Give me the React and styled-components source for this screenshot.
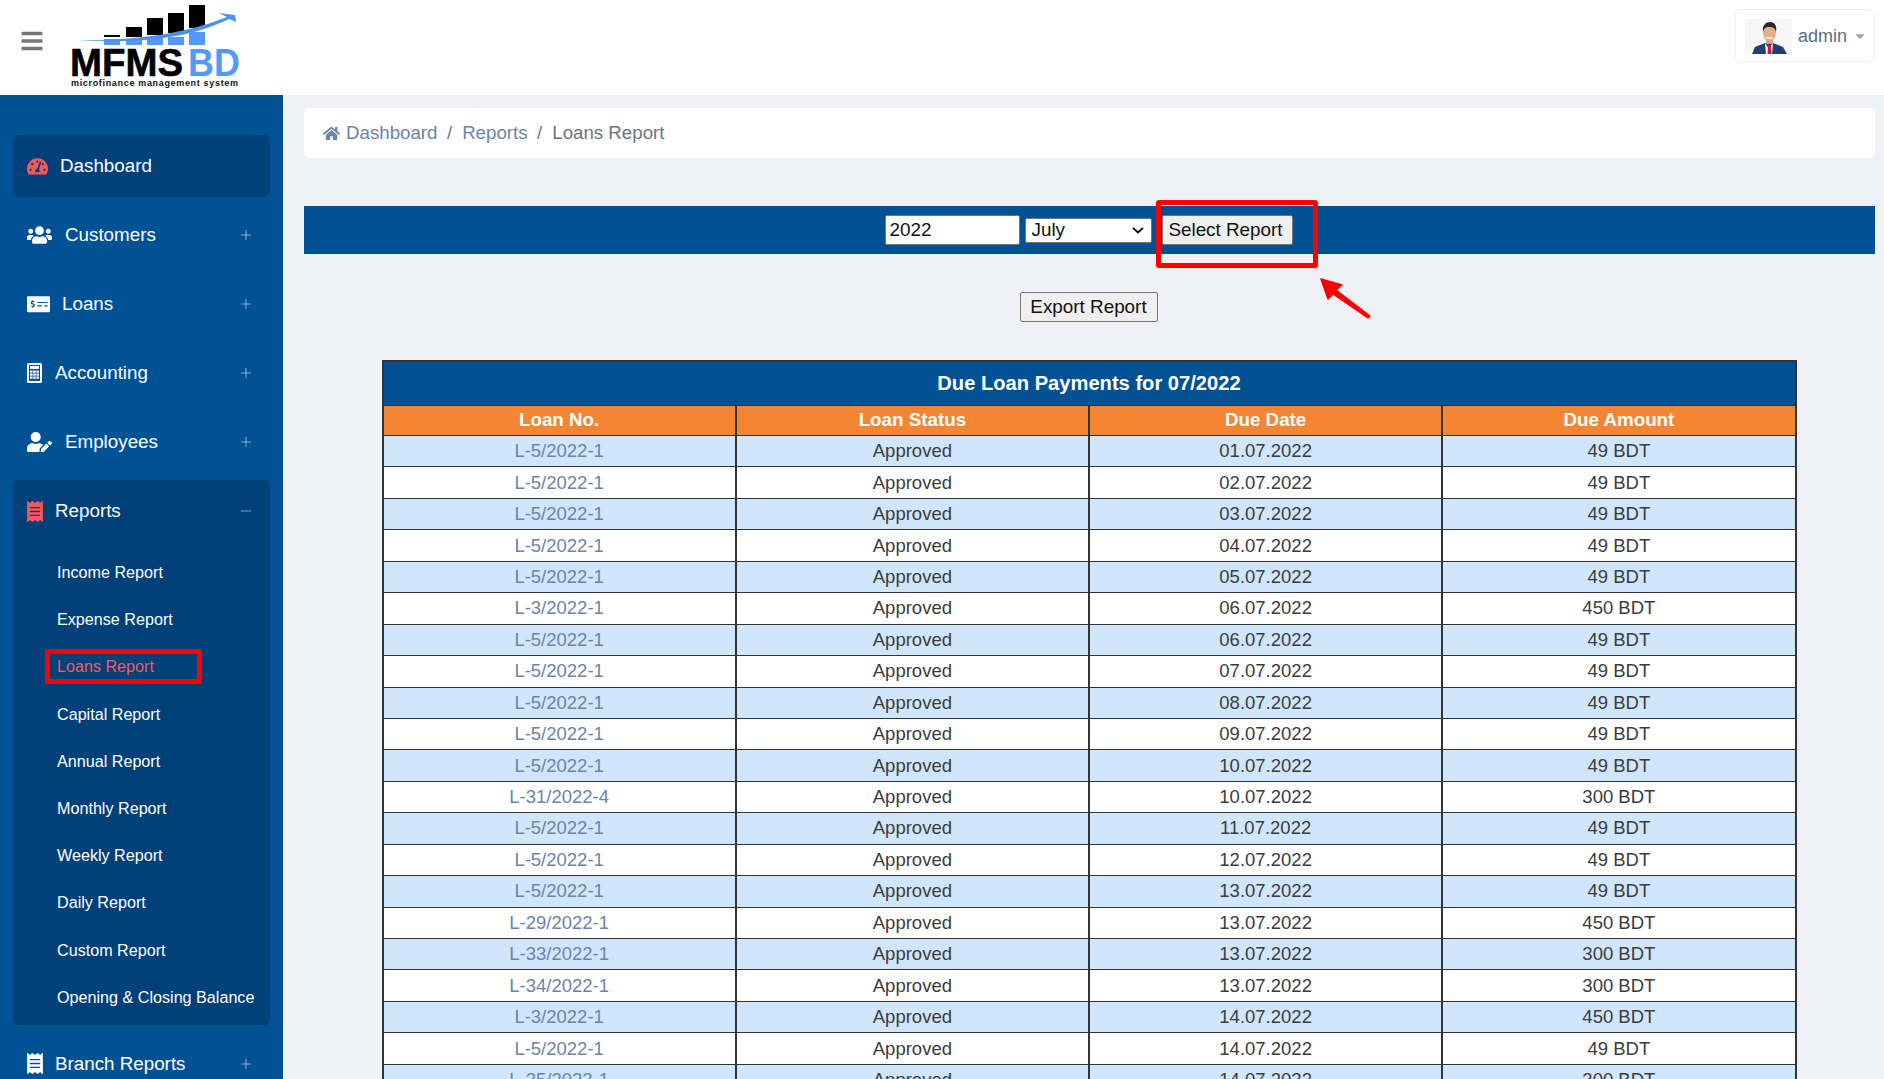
import React from "react";
import styled, { createGlobalStyle } from "styled-components";
import { FaBars, FaHome, FaTachometerAlt, FaUsers, FaMoneyCheckAlt, FaUserEdit, FaReceipt, FaCaretDown } from "react-icons/fa";
import { Plus, Minus } from "lucide-react";

const Global = createGlobalStyle`
  html, body { margin: 0; height: 100%; overflow: hidden; background: #f0f1f7; }
  * { box-sizing: border-box; }
  body { font-family: "Liberation Sans", Arial, sans-serif; }
`;

const chevron = `url("data:image/svg+xml,%3Csvg xmlns='http://www.w3.org/2000/svg' width='12' height='7' viewBox='0 0 12 7'%3E%3Cpath d='M1 1l5 4.5L11 1' fill='none' stroke='%23111' stroke-width='2'/%3E%3C/svg%3E")`;

const Page = styled.div`display: flex; flex-direction: column; height: 1079px; overflow: hidden;`;
const Header = styled.header`display: flex; align-items: flex-start; height: 95px; flex: none; background: #fff; padding: 0 9px 0 20px;`;
const Burger = styled.div`color: #777; font-size: 24px; line-height: 0; margin-top: 29px; width: 24px;`;
const LogoWrap = styled.div`margin-left: 23px; line-height: 0;`;
const UserBox = styled.div`
  margin-left: auto; margin-top: 9px; width: 140px; height: 53px; border: 1px solid #f0f1f7; border-radius: 6px;
  display: flex; align-items: center; padding: 1px 0 0 9px; gap: 6px; color: #5d6b82; font-size: 18px;
`;
const Caret = styled.span`color: #a2a7b8; font-size: 14px; line-height: 0; margin-left: 0;`;
const Body = styled.div`display: flex; flex: 1; min-height: 0;`;
const Sidebar = styled.nav`width: 283px; flex: none; background: #005294; padding: 40px 13px 0; overflow: hidden;`;
const NavItem = styled.div`
  height: 62px; margin-bottom: 7px; display: flex; align-items: center; padding: 0 14px; color: #fff; font-size: 18.8px;
  border-radius: 6px; background: ${p => (p.$active ? "#014078" : "transparent")};
`;
const IconSlot = styled.span`
  display: inline-flex; align-items: center; width: ${p => p.$w}px; flex: none; line-height: 0;
  color: ${p => (p.$red ? "#f9575a" : "#fff")};
  svg { width: ${p => p.$iw}px; height: ${p => p.$ih}px; flex: none; }
`;
const Toggle = styled.span`margin-left: auto; margin-right: 2px; color: rgba(255,255,255,.5); line-height: 0;`;
const Group = styled.div`background: #014078; border-radius: 6px; padding-bottom: 4px; margin-bottom: 8px;`;
const GroupHead = styled(NavItem)`margin-bottom: 7px;`;
const SubLink = styled.div`
  position: relative; height: 47.2px; display: flex; align-items: center; padding-left: 44px; font-size: 16.15px;
  color: ${p => (p.$active ? "#f4596a" : "#fff")};
`;
const RedMark = styled.span`
  position: absolute; left: 32px; top: 5.5px; width: 157px; height: 35px; border: 5px solid #f00; border-radius: 2px;
`;
const Main = styled.main`flex: 1; min-width: 0; padding: 13px 9px 0 21px;`;
const Crumbs = styled.div`
  height: 50px; background: #fff; border-radius: 5px; display: flex; align-items: center; padding-left: 19px; font-size: 18.7px; color: #6c757d;
`;
const Crumb = styled.span`color: #6c84a6;`;
const HomeIcon = styled.span`color: #6c84a6; font-size: 17px; line-height: 0; margin-right: 6px;`;
const Sep = styled.span`margin: 0 10px 0 9.5px;`;
const Bar = styled.form`
  position: relative; margin-top: 48px; height: 48px; background: #005294; display: flex; align-items: center; justify-content: center; padding-right: 2px;
`;
const YearInput = styled.input`
  width: 135px; height: 30px; font: 18.85px "Liberation Sans", sans-serif; color: #111; border: 1px solid #767676; border-radius: 2px; padding: 0 4px; margin: 0 5px 0 0; background: #fff;
`;
const MonthSelect = styled.select`
  appearance: none; width: 127px; height: 25px; font: 18.85px/21px "Liberation Sans", sans-serif; color: #111; border: 1px solid #767676; border-radius: 2px; padding: 0 0 2px 6px; margin: 0 10px 0 0;
  background: #fff ${chevron} no-repeat right 7px center;
`;
const Btn = styled.button`
  width: ${p => p.$w}px; height: 30px; font: 18.85px "Liberation Sans", sans-serif; color: #111; background: #efefef; border: 1px solid #767676; border-radius: 2px; padding: 0 ${p => p.$trim || 0}px 0 0; margin: 0;
`;
const SelectMark = styled.span`
  position: absolute; left: 852px; top: -6px; width: 162px; height: 68px; border: 5px solid #f00; border-radius: 3px; pointer-events: none;
`;
const Arrow = styled.svg`position: absolute; left: 1014px; top: 70px; pointer-events: none;`;
const ExportRow = styled.div`display: flex; justify-content: center; margin-top: 38px; padding-right: 2px;`;
const Table = styled.table`
  width: 1415px; margin: 38px 0 0 77.5px; border-collapse: collapse; table-layout: fixed; border: 2px solid #333; font-size: 18.5px; text-align: center;
`;
const TitleCell = styled.th`
  height: 44px; background: #005294; color: #fff; font-size: 20.15px; font-weight: 700; border: 1px solid #333; padding: 0;
`;
const HeadCell = styled.th`
  height: 30.5px; background: #f48633; color: #fff; font-size: 18.8px; font-weight: 700; border: 1px solid #333; border-left-width: 2px; padding: 0;
`;
const Row = styled.tr`background: ${p => (p.$blue ? "#d0e6fd" : "#fff")};`;
const Cell = styled.td`
  height: 31.45px; padding: 0; border: 1px solid #333; border-left-width: 2px; color: ${p => (p.$link ? "#6c84a6" : "#3c3c3c")};
`;

const Logo = () => (
  <svg width="180" height="90" viewBox="67 0 180 90">
    {[[104,35,37],[126,27,37],[147,18,35],[168,13,33],[189,5,28]].map(([x, t, m]) => (
      <g key={x}>
        <rect x={x} y={t} width="16" height={m - t} fill="#000" />
        <rect x={x} y={m + (x > 160 ? 4 : 2)} width="16" height={45 - m - (x > 160 ? 4 : 2)} fill="#5398fc" />
      </g>
    ))}
    <path d="M79 40 C140 41 190 32 227 17 L219 13 L235 15 L236 22 L229 19 C190 38 140 44 79 40Z" fill="#4c90f5" />
    <text x="70" y="76" fontFamily="Liberation Sans" fontWeight="700" fontSize="38" textLength="113" lengthAdjust="spacingAndGlyphs" fill="#000" stroke="#000" strokeWidth=".6">MFMS</text>
    <text x="188" y="76" fontFamily="Liberation Sans" fontWeight="700" fontSize="38" textLength="52" lengthAdjust="spacingAndGlyphs" fill="#5398fc">BD</text>
    <text x="71" y="86" fontFamily="Liberation Sans" fontWeight="700" fontSize="9" textLength="167" fill="#111">microfinance management system</text>
  </svg>
);

const Avatar = () => (
  <svg width="47" height="35" viewBox="0 0 47 35">
    <rect width="47" height="35" fill="#f6f6f6" />
    <path d="M7 35 L10 28 L20 24 L28 24 L38 28 L42 35Z" fill="#1f3f78" />
    <path d="M20 24 L24 30 L28 24 L27 35 L21 35Z" fill="#fff" />
    <path d="M23 26 L25.5 26 L26.5 35 L22.5 35Z" fill="#d8152f" />
    <rect x="21" y="19" width="7" height="6" fill="#d6a07c" />
    <ellipse cx="24.5" cy="14" rx="6.5" ry="8.5" fill="#e3b08e" />
    <path d="M18 13 C17 6 21 3 25 3 C30 3 32 7 31 13 C30 9 28 8 24 8 C21 8 19 9 18 13Z" fill="#2b2b2b" />
    <rect x="21.5" y="18" width="6" height="1.5" fill="#fff" />
  </svg>
);

const Calculator = () => (
  <svg viewBox="0 0 15 20">
    <rect width="15" height="20" rx="1.5" fill="#fff" />
    <rect x="2" y="2" width="11" height="16" fill="#005294" />
    <rect x="3" y="3" width="9" height="3" fill="#fff" />
    {[7.5, 10.5, 13.5].flatMap(y => [3, 6.2, 9.4].map(x => <rect key={`${x}-${y}`} x={x} y={y} width="2.6" height="2.2" fill="#fff" />))}
  </svg>
);

const ArrowMark = () => (
  <Arrow width="60" height="50" viewBox="0 0 60 50">
    <path d="M3 3 L24 9 L18 14 L52 40 L50 42 L15 18 L10 23Z" fill="#f00" stroke="#f00" strokeWidth="1.5" strokeLinejoin="round" />
  </Arrow>
);

const rows = [
  ["L-5/2022-1","01.07.2022","49 BDT"],["L-5/2022-1","02.07.2022","49 BDT"],["L-5/2022-1","03.07.2022","49 BDT"],
  ["L-5/2022-1","04.07.2022","49 BDT"],["L-5/2022-1","05.07.2022","49 BDT"],["L-3/2022-1","06.07.2022","450 BDT"],
  ["L-5/2022-1","06.07.2022","49 BDT"],["L-5/2022-1","07.07.2022","49 BDT"],["L-5/2022-1","08.07.2022","49 BDT"],
  ["L-5/2022-1","09.07.2022","49 BDT"],["L-5/2022-1","10.07.2022","49 BDT"],["L-31/2022-4","10.07.2022","300 BDT"],
  ["L-5/2022-1","11.07.2022","49 BDT"],["L-5/2022-1","12.07.2022","49 BDT"],["L-5/2022-1","13.07.2022","49 BDT"],
  ["L-29/2022-1","13.07.2022","450 BDT"],["L-33/2022-1","13.07.2022","300 BDT"],["L-34/2022-1","13.07.2022","300 BDT"],
  ["L-3/2022-1","14.07.2022","450 BDT"],["L-5/2022-1","14.07.2022","49 BDT"],["L-35/2022-1","14.07.2022","300 BDT"],
];

const subs = ["Income Report","Expense Report","Loans Report","Capital Report","Annual Report","Monthly Report","Weekly Report","Daily Report","Custom Report","Opening & Closing Balance"];

const Item = ({ icon, w, iw, ih, label }) => (
  <NavItem>
    <IconSlot $w={w} $iw={iw} $ih={ih}>{icon}</IconSlot>
    {label}
    <Toggle><Plus size={16} strokeWidth={1.6} /></Toggle>
  </NavItem>
);

export default function App() {
  return (
    <Page>
      <Global />
      <Header>
        <Burger><FaBars /></Burger>
        <LogoWrap><Logo /></LogoWrap>
        <UserBox><Avatar />admin<Caret><FaCaretDown /></Caret></UserBox>
      </Header>
      <Body>
        <Sidebar>
          <NavItem $active>
            <IconSlot $w={33} $iw={21} $ih={18.7} $red><FaTachometerAlt /></IconSlot>Dashboard
          </NavItem>
          <Item icon={<FaUsers />} w={38} iw={25} ih={20} label="Customers" />
          <Item icon={<FaMoneyCheckAlt />} w={35} iw={23} ih={18.4} label="Loans" />
          <Item icon={<Calculator />} w={28} iw={15} ih={20} label="Accounting" />
          <Item icon={<FaUserEdit />} w={38} iw={25} ih={20} label="Employees" />
          <Group>
            <GroupHead as="div">
              <IconSlot $w={28} $iw={16} $ih={21} $red><FaReceipt /></IconSlot>Reports
              <Toggle><Minus size={16} strokeWidth={1.6} /></Toggle>
            </GroupHead>
            {subs.map(s => (
              <SubLink key={s} $active={s === "Loans Report"}>
                {s}
                {s === "Loans Report" && <RedMark />}
              </SubLink>
            ))}
          </Group>
          <Item icon={<FaReceipt />} w={28} iw={16} ih={21} label="Branch Reports" />
        </Sidebar>
        <Main>
          <Crumbs>
            <HomeIcon><FaHome /></HomeIcon>
            <Crumb>Dashboard</Crumb><Sep>/</Sep><Crumb>Reports</Crumb><Sep>/</Sep>Loans Report
          </Crumbs>
          <Bar>
            <YearInput defaultValue="2022" />
            <MonthSelect defaultValue="July"><option>July</option></MonthSelect>
            <Btn type="button" $w={131} $trim={3}>Select Report</Btn>
            <SelectMark />
            <ArrowMark />
          </Bar>
          <ExportRow><Btn type="button" $w={138}>Export Report</Btn></ExportRow>
          <Table>
            <thead>
              <tr><TitleCell colSpan={4}>Due Loan Payments for 07/2022</TitleCell></tr>
              <tr>
                <HeadCell>Loan No.</HeadCell><HeadCell>Loan Status</HeadCell><HeadCell>Due Date</HeadCell><HeadCell>Due Amount</HeadCell>
              </tr>
            </thead>
            <tbody>
              {rows.map((r, i) => (
                <Row key={i} $blue={i % 2 === 0}>
                  <Cell $link>{r[0]}</Cell><Cell>Approved</Cell><Cell>{r[1]}</Cell><Cell>{r[2]}</Cell>
                </Row>
              ))}
            </tbody>
          </Table>
        </Main>
      </Body>
    </Page>
  );
}
